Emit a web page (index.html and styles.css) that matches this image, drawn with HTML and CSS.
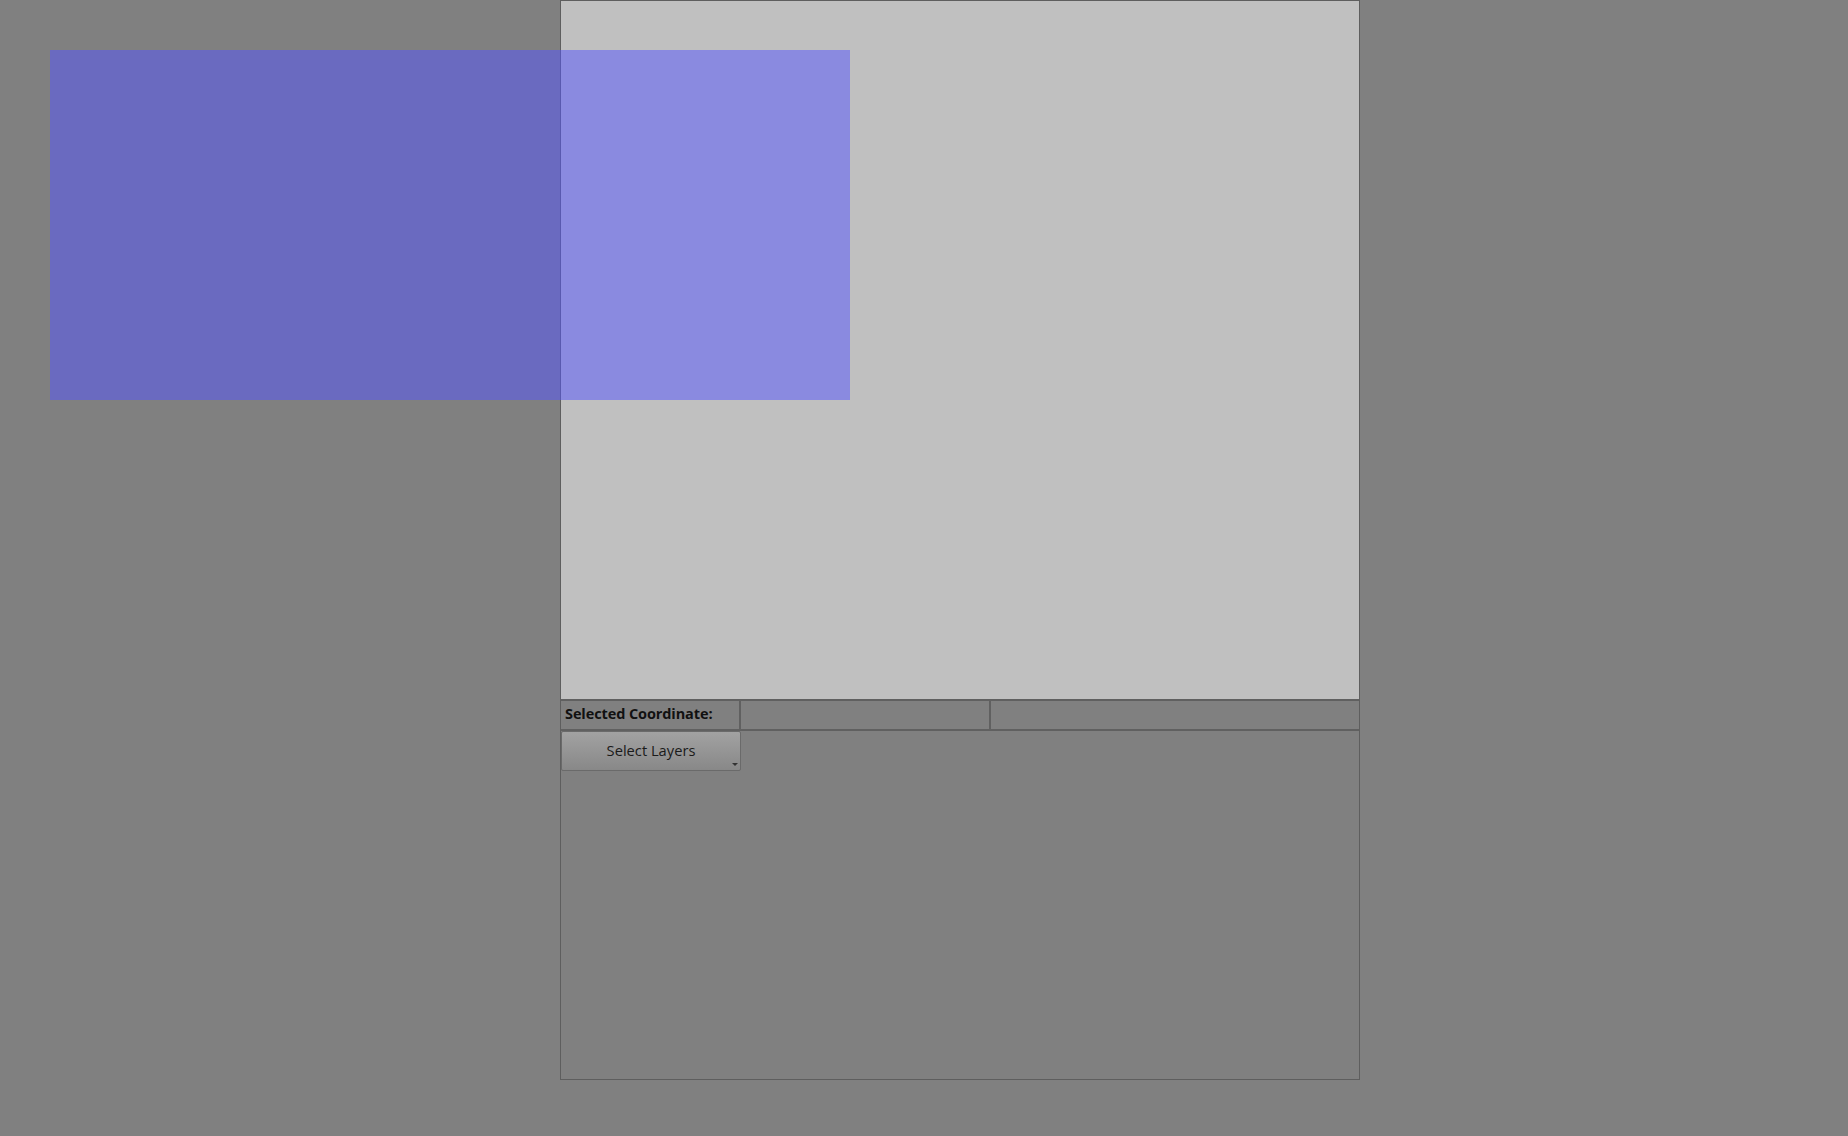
FILE: index.html
```html
<!DOCTYPE html>
<html>
<head>
<meta charset="utf-8">
<link rel="stylesheet" href="styles.css">
</head>
<body>
<div class="panel">
  <div class="canvas"></div>
  <div class="coords">
    <div class="cell label">Selected Coordinate:</div>
    <div class="cell"></div>
    <div class="cell last"></div>
  </div>
  <div class="tools">
    <button class="layers">Select Layers<span class="arrow"></span></button>
  </div>
</div>
<div class="overlay"></div>
</body>
</html>
```
FILE: styles.css
```css
html, body {
  margin: 0;
  padding: 0;
  background: #808080;
  width: 1848px;
  height: 1136px;
  overflow: hidden;
  font-family: "Open Sans", "DejaVu Sans", sans-serif;
}
.panel {
  margin-left: 560px;
  width: 798px;
  height: 1078px;
  border: 1px solid #5e5e5e;
  display: flex;
  flex-direction: column;
}
.canvas {
  height: 698px;
  background: #c0c0c0;
}
.coords {
  display: grid;
  grid-template-columns: 180px 250px 1fr;
  height: 28px;
  border-top: 2px solid #606060;
  border-bottom: 2px solid #606060;
}
.cell {
  border-right: 2px solid #606060;
  display: flex;
  align-items: center;
}
.cell.last { border-right: none; }
.label {
  font-weight: bold;
  font-size: 14.5px;
  color: #111;
  padding-left: 4px;
  padding-bottom: 3px;
  letter-spacing: -0.1px;
}
.tools {
  padding-top: 0;
}
.layers {
  position: relative;
  width: 180px;
  height: 40px;
  margin: 0;
  padding: 0 0 3px 0;
  border: 1px solid #6a6a6a;
  border-radius: 2px;
  background: linear-gradient(#a2a2a2, #888888);
  font-family: "Open Sans", "DejaVu Sans", sans-serif;
  font-size: 14.7px;
  color: #1a1a1a;
}
.arrow {
  position: absolute;
  right: 2px;
  bottom: 4px;
  width: 0;
  height: 0;
  border-left: 3px solid transparent;
  border-right: 3px solid transparent;
  border-top: 3px solid #333;
}
.overlay {
  position: absolute;
  left: 50px;
  top: 50px;
  width: 800px;
  height: 350px;
  background: rgba(84, 84, 255, 0.5);
}
```
